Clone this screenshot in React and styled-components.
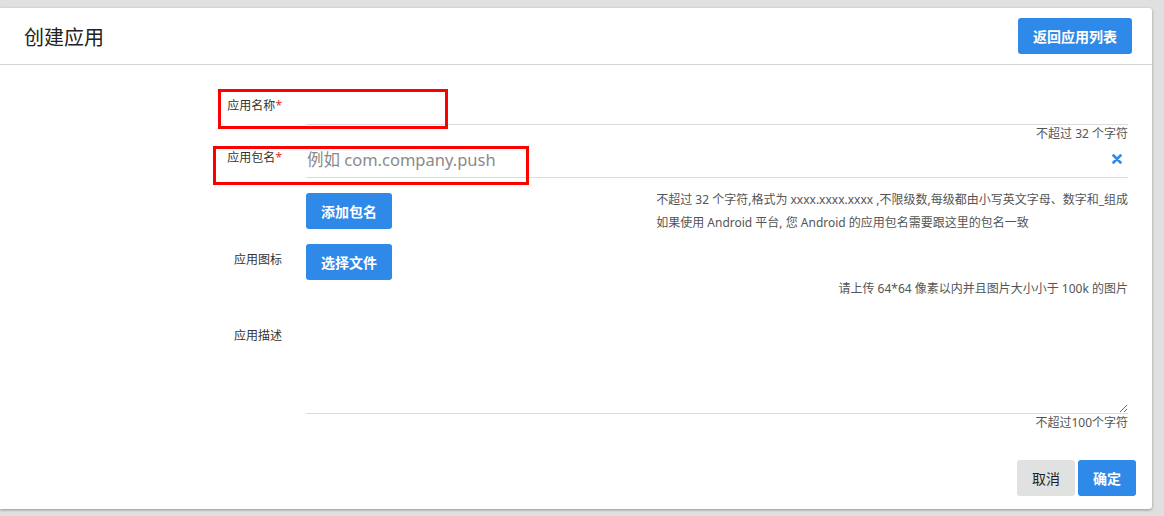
import React from "react";
import styled, { createGlobalStyle } from "styled-components";

const GlobalStyle = createGlobalStyle`
  html, body {
    margin: 0;
    padding: 0;
    background: #dfe0e0;
  }
  body {
    font-family: "Noto Sans", "Noto Sans CJK SC", sans-serif;
  }
`;

const Page = styled.div`
  padding: 8px 12px 7px 0;
`;

const Card = styled.section`
  display: flex;
  flex-direction: column;
  height: 501px;
  background: #fff;
  border-radius: 0 3px 3px 0;
  box-shadow: 0 1px 3px rgba(0, 0, 0, 0.35);
`;

const Header = styled.header`
  display: flex;
  align-items: center;
  justify-content: space-between;
  height: 56px;
  padding: 0 20px 0 24px;
  border-bottom: 1px solid #d4d4d4;
`;

const Title = styled.h1`
  margin: 0;
  font-size: 20px;
  font-weight: 400;
  color: #222;
`;

const Button = styled.button`
  height: 36px;
  padding: 0 15px;
  border: none;
  border-radius: 3px;
  background: ${(p) => (p.$gray ? "#e0e2e2" : "#2f89e9")};
  color: ${(p) => (p.$gray ? "#222" : "#fff")};
  font-family: inherit;
  font-size: 14px;
  font-weight: ${(p) => (p.$gray ? 400 : 700)};
  cursor: pointer;
  flex-shrink: 0;
`;

/* форма */
const Form = styled.form`
  padding: 28px 24px 0 0;
`;

const Row = styled.div`
  position: relative;
  display: grid;
  grid-template-columns: 282px 1fr;
  column-gap: 24px;
  margin-top: ${(p) => p.$gap || 0}px;
`;

const Label = styled.label`
  padding-top: ${(p) => p.$top || 0}px;
  text-align: right;
  font-size: 12px;
  line-height: 18px;
  color: #333;
`;

const Required = styled.span`
  color: #e03030;
`;

const Control = styled.div`
  display: flex;
  flex-direction: column;
  min-width: 0;
`;

const InputWrap = styled.div`
  position: relative;
`;

const Input = styled.input`
  display: block;
  width: 100%;
  height: 32px;
  box-sizing: border-box;
  padding: 0 1px 5px;
  border: none;
  border-bottom: 1px solid #dcdcdc;
  outline: none;
  font-family: inherit;
  font-size: 16.5px;
  color: #333;
  &::placeholder {
    color: #8a8a8a;
  }
`;

const Clear = styled.span`
  position: absolute;
  right: 6px;
  top: 8px;
  width: 10px;
  height: 10px;
  display: flex;
  cursor: pointer;
`;

const Hint = styled.div`
  font-size: 12px;
  line-height: 18px;
  color: #555;
  text-align: right;
`;

const PackageBar = styled.div`
  display: flex;
  align-items: center;
  justify-content: space-between;
  margin-top: 10px;
`;

const HelpText = styled.div`
  font-size: 12px;
  line-height: 23px;
  color: #555;
`;

const TextArea = styled.textarea`
  display: block;
  width: 100%;
  height: 88px;
  box-sizing: border-box;
  border: none;
  border-bottom: 1px solid #dcdcdc;
  outline: none;
  resize: vertical;
  font-family: inherit;
  font-size: 14px;
`;

const Footer = styled.footer`
  display: flex;
  justify-content: flex-end;
  gap: 3px;
  margin-top: auto;
  padding: 0 16px 13px;
`;

/* красные рамки поверх формы */
const Highlight = styled.div`
  position: absolute;
  left: ${(p) => p.$left}px;
  top: ${(p) => p.$top}px;
  width: ${(p) => p.$w}px;
  height: ${(p) => p.$h}px;
  box-sizing: border-box;
  border: 3px solid #ff0000;
  pointer-events: none;
`;

export default function App() {
  return (
    <>
      <GlobalStyle />
      <Page>
        <Card>
          <Header>
            <Title>创建应用</Title>
            <Button>返回应用列表</Button>
          </Header>

          <Form onSubmit={(e) => e.preventDefault()}>
            <Row>
              <Label $top={4}>
                应用名称<Required>*</Required>
              </Label>
              <Control>
                <Input />
                <Hint>不超过 32 个字符</Hint>
              </Control>
              <Highlight $left={218} $top={-4} $w={230} $h={40} />
            </Row>

            <Row $gap={3}>
              <Label $top={3}>
                应用包名<Required>*</Required>
              </Label>
              <Control>
                <InputWrap>
                  <Input placeholder="例如 com.company.push" />
                  <Clear>
                    <svg width="10" height="10" viewBox="0 0 10 10">
                      <path d="M1.5 1.5 L8.5 8.5 M8.5 1.5 L1.5 8.5" stroke="#2f89e9" strokeWidth="2.6" strokeLinecap="round" />
                    </svg>
                  </Clear>
                </InputWrap>
                <PackageBar>
                  <Button type="button">添加包名</Button>
                  <HelpText>
                    不超过 32 个字符,格式为 xxxx.xxxx.xxxx ,不限级数,每级都由小写英文字母、数字和_组成
                    <br />
                    如果使用 Android 平台, 您 Android 的应用包名需要跟这里的包名一致
                  </HelpText>
                </PackageBar>
              </Control>
              <Highlight $left={213} $top={0} $w={316} $h={39} />
            </Row>

            <Row $gap={10}>
              <Label $top={7}>应用图标</Label>
              <Control>
                <div>
                  <Button type="button">选择文件</Button>
                </div>
                <Hint>请上传 64*64 像素以内并且图片大小小于 100k 的图片</Hint>
              </Control>
            </Row>

            <Row $gap={28}>
              <Label $top={1}>应用描述</Label>
              <Control>
                <TextArea />
                <Hint>不超过100个字符</Hint>
              </Control>
            </Row>
          </Form>

          <Footer>
            <Button $gray type="button">取消</Button>
            <Button type="button">确定</Button>
          </Footer>
        </Card>
      </Page>
    </>
  );
}
